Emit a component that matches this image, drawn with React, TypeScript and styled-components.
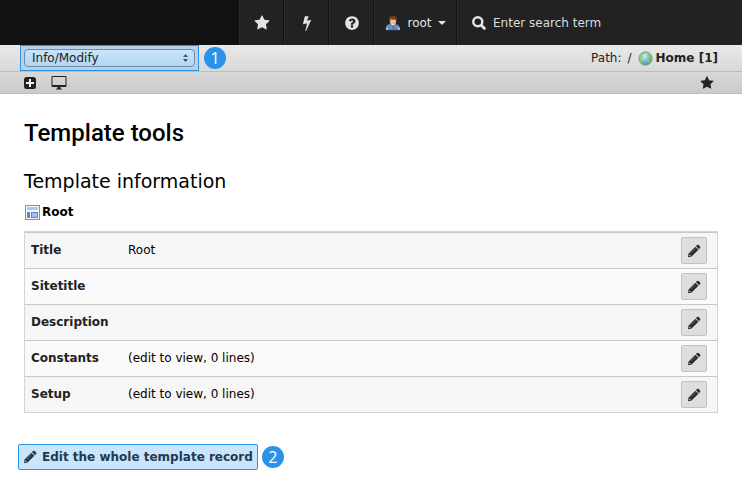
import React from "react";
import styled, { createGlobalStyle } from "styled-components";

const GlobalStyle = createGlobalStyle`
  *, *::before, *::after { box-sizing: border-box; }
  body {
    margin: 0;
    background: #fff;
    color: #000;
    font: 12px/18px Verdana, "DejaVu Sans", sans-serif;
  }
  button, input, select { font: inherit; color: inherit; }
`;

const paths = {
  star: "M1728 647q0 22-26 48l-363 354 86 500q1 7 1 20 0 21-10.500 35.500t-30.500 14.500q-19 0-40-12l-449-236-449 236q-22 12-40 12-21 0-31.500-14.500t-10.500-35.500q0-6 2-20l86-500-364-354q-25-27-25-48 0-37 56-46l502-73 225-455q19-41 49-41t49 41l225 455 502 73q56 9 56 46z",
  bolt: "M1333 566q18 20 7 44l-540 1157q-13 25-42 25-4 0-14-2-17-5-25.500-19t-4.500-30l197-808-406 101q-4 1-12 1-18 0-31-11-18-15-13-39l201-825q4-14 16-23t28-9h328q19 0 32 12.500t13 29.500q0 8-5 18l-171 463 396-98q8-2 12-2 19 0 34 15z",
  help: "M1024 1376v-192q0-14-9-23t-23-9h-192q-14 0-23 9t-9 23v192q0 14 9 23t23 9h192q14 0 23-9t9-23zm256-672q0-88-55.500-163t-138.500-116-170-41q-243 0-371 213-15 24 8 42l132 100q7 6 19 6 16 0 25-12 53-68 86-92 34-24 86-24 48 0 85.500 26t37.500 59q0 38-20 61t-68 45q-63 28-115.500 86.500t-52.500 125.500v36q0 14 9 23t23 9h192q14 0 23-9t9-23q0-19 21.500-49.500t54.500-49.500q32-18 49-28.500t46-35 44.500-48 28-60.500 12.500-81zm384 192q0 209-103 385.500t-279.500 279.500-385.500 103-385.500-103-279.500-279.500-103-385.500 103-385.500 279.500-279.500 385.500-103 385.500 103 279.500 279.500 103 385.500z",
};

const Svg = styled.svg`
  display: block;
  flex: none;
`;

function Glyph({ name, size }: { name: keyof typeof paths; size: number }) {
  return (
    <Svg width={size} height={size} viewBox="0 0 1792 1792" fill="currentColor" aria-hidden="true">
      <path d={paths[name]} />
    </Svg>
  );
}

const SearchIcon = () => (
  <Svg width="14" height="14" viewBox="0 0 14 14" fill="none" stroke="currentColor" aria-hidden="true">
    <circle cx="5.800" cy="5.800" r="4.500" strokeWidth="2.500" />
    <path d="m9.300 9.300 3 3" strokeWidth="3" strokeLinecap="round" />
  </Svg>
);

const PencilIcon = () => (
  <Svg width="14" height="14" viewBox="0 0 14 14" fill="currentColor" aria-hidden="true">
    <path fillRule="evenodd" d="M8.300 2.700 11.400 5.800 4.600 12.500 1 13.200 1.500 9.500zM2.400 10.500 2.100 12.100 3.700 11.800z" />
    <path d="M8.900 2.100 10 1q.8-.7 1.600 0l1.500 1.500q.7.800 0 1.600L12 5.200z" />
    <path d="m8.300 4.400-5 5" stroke="#fff" strokeOpacity=".35" strokeWidth=".7" />
  </Svg>
);

const UserIcon = () => (
  <Svg width="16" height="16" viewBox="0 0 16 16" aria-hidden="true">
    <path d="M1 15v-2.500q.5-3 3.500-3.500h6q3.500.5 4 3.500V15z" fill="#5b97cf" stroke="#2f6298" strokeWidth=".7" />
    <path d="M1 12.500h2V15H1zM13 12.500h2V15h-2z" fill="#eda875" />
    <path d="M5.500 8.500 8 11l2.500-2.500z" fill="#fff" />
    <path d="M7.500 10h1.200l.5 3-1 1.300-1-1.300z" fill="#d44c2d" />
    <rect x="5" y="3" width="6" height="6.500" rx="2.500" fill="#f3bd8f" />
    <path d="M4 6.500V3.800Q4.500 1 8 1t4 3v2.500h-1L10.500 4.500q-3 .5-4.500-.5l-1 2.500z" fill="#73401e" />
  </Svg>
);

const GlobeIcon = () => (
  <Svg width="15" height="15" viewBox="0 0 15 15" aria-hidden="true">
    <defs>
      <radialGradient id="sea" cx=".4" cy=".3" r=".8">
        <stop offset="0" stopColor="#d3ebf8" />
        <stop offset="1" stopColor="#2f83c9" />
      </radialGradient>
    </defs>
    <circle cx="7.500" cy="7.500" r="6.600" fill="url(#sea)" stroke="#6bab60" />
    <path d="M2 4.500Q4 1.500 7.500 1.500L6 3.200 4.500 4l.5 1.500L3.500 7 5 9.500l-.5 2.500Q1 10 1.500 6z" fill="#8dd17b" />
    <path d="M10 2.200Q14 4 13.300 8q-.8 3-2.800 4.500L10 10.500 9.500 9l1-2 1-1z" fill="#76c46d" />
  </Svg>
);

const TemplateIcon = () => (
  <Svg width="15" height="15" viewBox="0 0 15 15" shapeRendering="crispEdges" aria-hidden="true">
    <path fill="#6d95c5" d="M0 0h15v15H0z" />
    <path fill="#f3f8fe" d="M1 1h13v13H1z" />
    <path fill="#a9cdf2" d="M2 2h11v3H2z" />
    <path fill="#6089c0" d="M2 7h3v6H2zM6 7h7v6H6z" />
    <path fill="#a5c3ea" d="M7 8h5v4H7z" />
  </Svg>
);

const AddIcon = () => (
  <Svg width="12" height="12" viewBox="0 0 12 12" aria-hidden="true">
    <rect width="12" height="12" rx="2.500" fill="#222" />
    <path d="M6 2v8M2 6h8" stroke="#eee" strokeWidth="2" />
  </Svg>
);

const ScreenIcon = () => (
  <Svg width="16" height="14" viewBox="0 0 16 14" fill="#222" aria-hidden="true">
    <path fillRule="evenodd" d="M1.500 0h13q1 0 1 1v9q0 1-1 1h-13q-1 0-1-1V1q0-1 1-1zm0 1v8h13V1z" />
    <path d="M6.500 11h3v1.200l1.500.8v.5H5V13l1.500-.8z" />
  </Svg>
);

const TopBar = styled.header`
  display: flex;
  height: 45px;
  background: #111;
  color: #e4e4e4;
`;

const Brand = styled.div`
  flex: 0 0 239px;
`;

const TopButton = styled.button<{ $wide?: boolean }>`
  display: flex;
  align-items: center;
  justify-content: center;
  gap: 6px;
  flex: 0 0 ${(p) => (p.$wide ? 83 : 45)}px;
  padding: 0;
  border: 0;
  border-left: 1px solid #2d2d2d;
  border-right: 1px solid #111;
  background: #222;
`;

const Caret = styled.span`
  border: 4px solid transparent;
  border-top-color: currentColor;
  border-bottom: 0;
`;

const Search = styled.label`
  display: flex;
  align-items: center;
  gap: 7px;
  flex: 1;
  min-width: 0;
  padding-left: 14px;
  border-left: 1px solid #2d2d2d;
  background: #222;
`;

const SearchInput = styled.input`
  flex: 1;
  min-width: 0;
  padding: 0;
  border: 0;
  outline: 0;
  background: none;
  &::placeholder { color: #ddd; opacity: 1; }
`;

const DocHeader = styled.div`
  background: linear-gradient(#e9e9e9, #cacaca);
  border-bottom: 1px solid #bdbdbd;
  color: #222;
`;

const DocRow = styled.div<{ $divided?: boolean }>`
  display: flex;
  align-items: center;
  justify-content: space-between;
  height: ${(p) => (p.$divided ? 27 : 21)}px;
  padding: ${(p) => (p.$divided ? "0 24px 0 20px" : "0 28px 0 24px")};
  border-bottom: ${(p) => (p.$divided ? "1px solid #bdbdbd" : "0")};
`;

const Group = styled.div<{ $gap: number }>`
  display: flex;
  align-items: center;
  gap: ${(p) => p.$gap}px;
`;

const SelectFrame = styled.div`
  position: relative;
  padding: 3px;
  border: 1px solid #2b92ea;
  background: #b6d1e8;
`;

const ModuleSelect = styled.select`
  display: block;
  width: 171px;
  height: 18px;
  padding: 0 7px;
  appearance: none;
  border: 1px solid #6d8ba8;
  border-radius: 4px;
  background: linear-gradient(#c9e4fa, #b4d6f1);
  line-height: 16px;
`;

const SelectArrows = styled.svg`
  position: absolute;
  right: 10px;
  top: 8px;
  pointer-events: none;
`;

const Marker = styled.span`
  display: flex;
  align-items: center;
  justify-content: center;
  width: 22px;
  height: 22px;
  border-radius: 50%;
  background: #2b92ea;
  color: #fff;
  font: 16px/22px "Open Sans", sans-serif;
`;

const PathLink = styled.a`
  display: flex;
  align-items: center;
  gap: 3px;
  color: inherit;
  font-weight: bold;
  text-decoration: none;
`;

const IconButton = styled.button`
  display: flex;
  padding: 0;
  border: 0;
  background: none;
`;

const Content = styled.main`
  padding: 24px;
`;

const Title = styled.h1`
  margin: 0;
  font: 500 24px/30px Roboto, sans-serif;
`;

const Subtitle = styled.h2`
  margin: 21px 0 10px;
  font-size: 19px;
  font-weight: normal;
  line-height: 24px;
`;

const RecordName = styled.div`
  display: flex;
  align-items: center;
  gap: 2px;
  padding-left: 1px;
  font-weight: bold;
`;

const InfoTable = styled.table`
  width: 100%;
  margin-top: 10px;
  border: 1px solid #d4d4d4;
  border-spacing: 0;
`;

const InfoRow = styled.tr`
  height: 36px;
  background: #fafafa;
  &:nth-child(odd) { background: #f6f6f6; }
  & > * { border-top: 1px solid #c8c8c8; }
`;

const Label = styled.th`
  width: 97px;
  padding: 0 6px 2px;
  color: #222;
  text-align: left;
`;

const Value = styled.td`
  padding: 0 6px 2px;
`;

const ActionCell = styled.td`
  width: 46px;
  padding: 4px 10px;
`;

const EditButton = styled.button`
  display: flex;
  align-items: center;
  justify-content: center;
  width: 26px;
  height: 27px;
  padding: 0;
  border: 1px solid #c2c2c2;
  border-radius: 2px;
  background: #dedede;
  color: #2d2d2d;
`;

const Footer = styled.div`
  display: flex;
  align-items: center;
  gap: 4px;
  margin: 31px 0 0 -6px;
`;

const EditAll = styled.a`
  display: flex;
  align-items: center;
  gap: 5px;
  height: 26px;
  padding: 0 4px;
  border: 1px solid #2b92ea;
  border-radius: 2px;
  background: #cae4fb;
  color: #213a50;
  font-weight: bold;
  text-decoration: none;
`;

const rows = [
  { label: "Title", value: "Root" },
  { label: "Sitetitle", value: "" },
  { label: "Description", value: "" },
  { label: "Constants", value: "(edit to view, 0 lines)" },
  { label: "Setup", value: "(edit to view, 0 lines)" },
];

export default function App() {
  return (
    <>
      <GlobalStyle />
      <TopBar>
        <Brand />
        <TopButton aria-label="Bookmarks"><Glyph name="star" size={16} /></TopButton>
        <TopButton aria-label="Clear cache"><Glyph name="bolt" size={16} /></TopButton>
        <TopButton aria-label="Help"><Glyph name="help" size={16} /></TopButton>
        <TopButton $wide><UserIcon />root<Caret /></TopButton>
        <Search>
          <SearchIcon />
          <SearchInput type="text" placeholder="Enter search term" aria-label="Search" />
        </Search>
      </TopBar>
      <DocHeader>
        <DocRow $divided>
          <Group $gap={5}>
            <SelectFrame>
              <ModuleSelect aria-label="Module function">
                <option>Info/Modify</option>
              </ModuleSelect>
              <SelectArrows width="5" height="8" viewBox="0 0 5 8" fill="#3b5265" aria-hidden="true">
                <path d="M0 3 2.500 0 5 3zM0 5h5L2.500 8z" />
              </SelectArrows>
            </SelectFrame>
            <Marker>1</Marker>
          </Group>
          <Group $gap={6}>
            <span>Path:</span>
            <span>/</span>
            <PathLink href="#home"><GlobeIcon />Home [1]</PathLink>
          </Group>
        </DocRow>
        <DocRow>
          <Group $gap={15}>
            <IconButton aria-label="New record"><AddIcon /></IconButton>
            <IconButton aria-label="View page"><ScreenIcon /></IconButton>
          </Group>
          <IconButton aria-label="Add bookmark"><Glyph name="star" size={14} /></IconButton>
        </DocRow>
      </DocHeader>
      <Content>
        <Title>Template tools</Title>
        <Subtitle>Template information</Subtitle>
        <RecordName><TemplateIcon />Root</RecordName>
        <InfoTable>
          <tbody>
            {rows.map((row) => (
              <InfoRow key={row.label}>
                <Label scope="row">{row.label}</Label>
                <Value>{row.value}</Value>
                <ActionCell>
                  <EditButton aria-label={`Edit ${row.label}`}><PencilIcon /></EditButton>
                </ActionCell>
              </InfoRow>
            ))}
          </tbody>
        </InfoTable>
        <Footer>
          <EditAll href="#edit"><PencilIcon />Edit the whole template record</EditAll>
          <Marker>2</Marker>
        </Footer>
      </Content>
    </>
  );
}
